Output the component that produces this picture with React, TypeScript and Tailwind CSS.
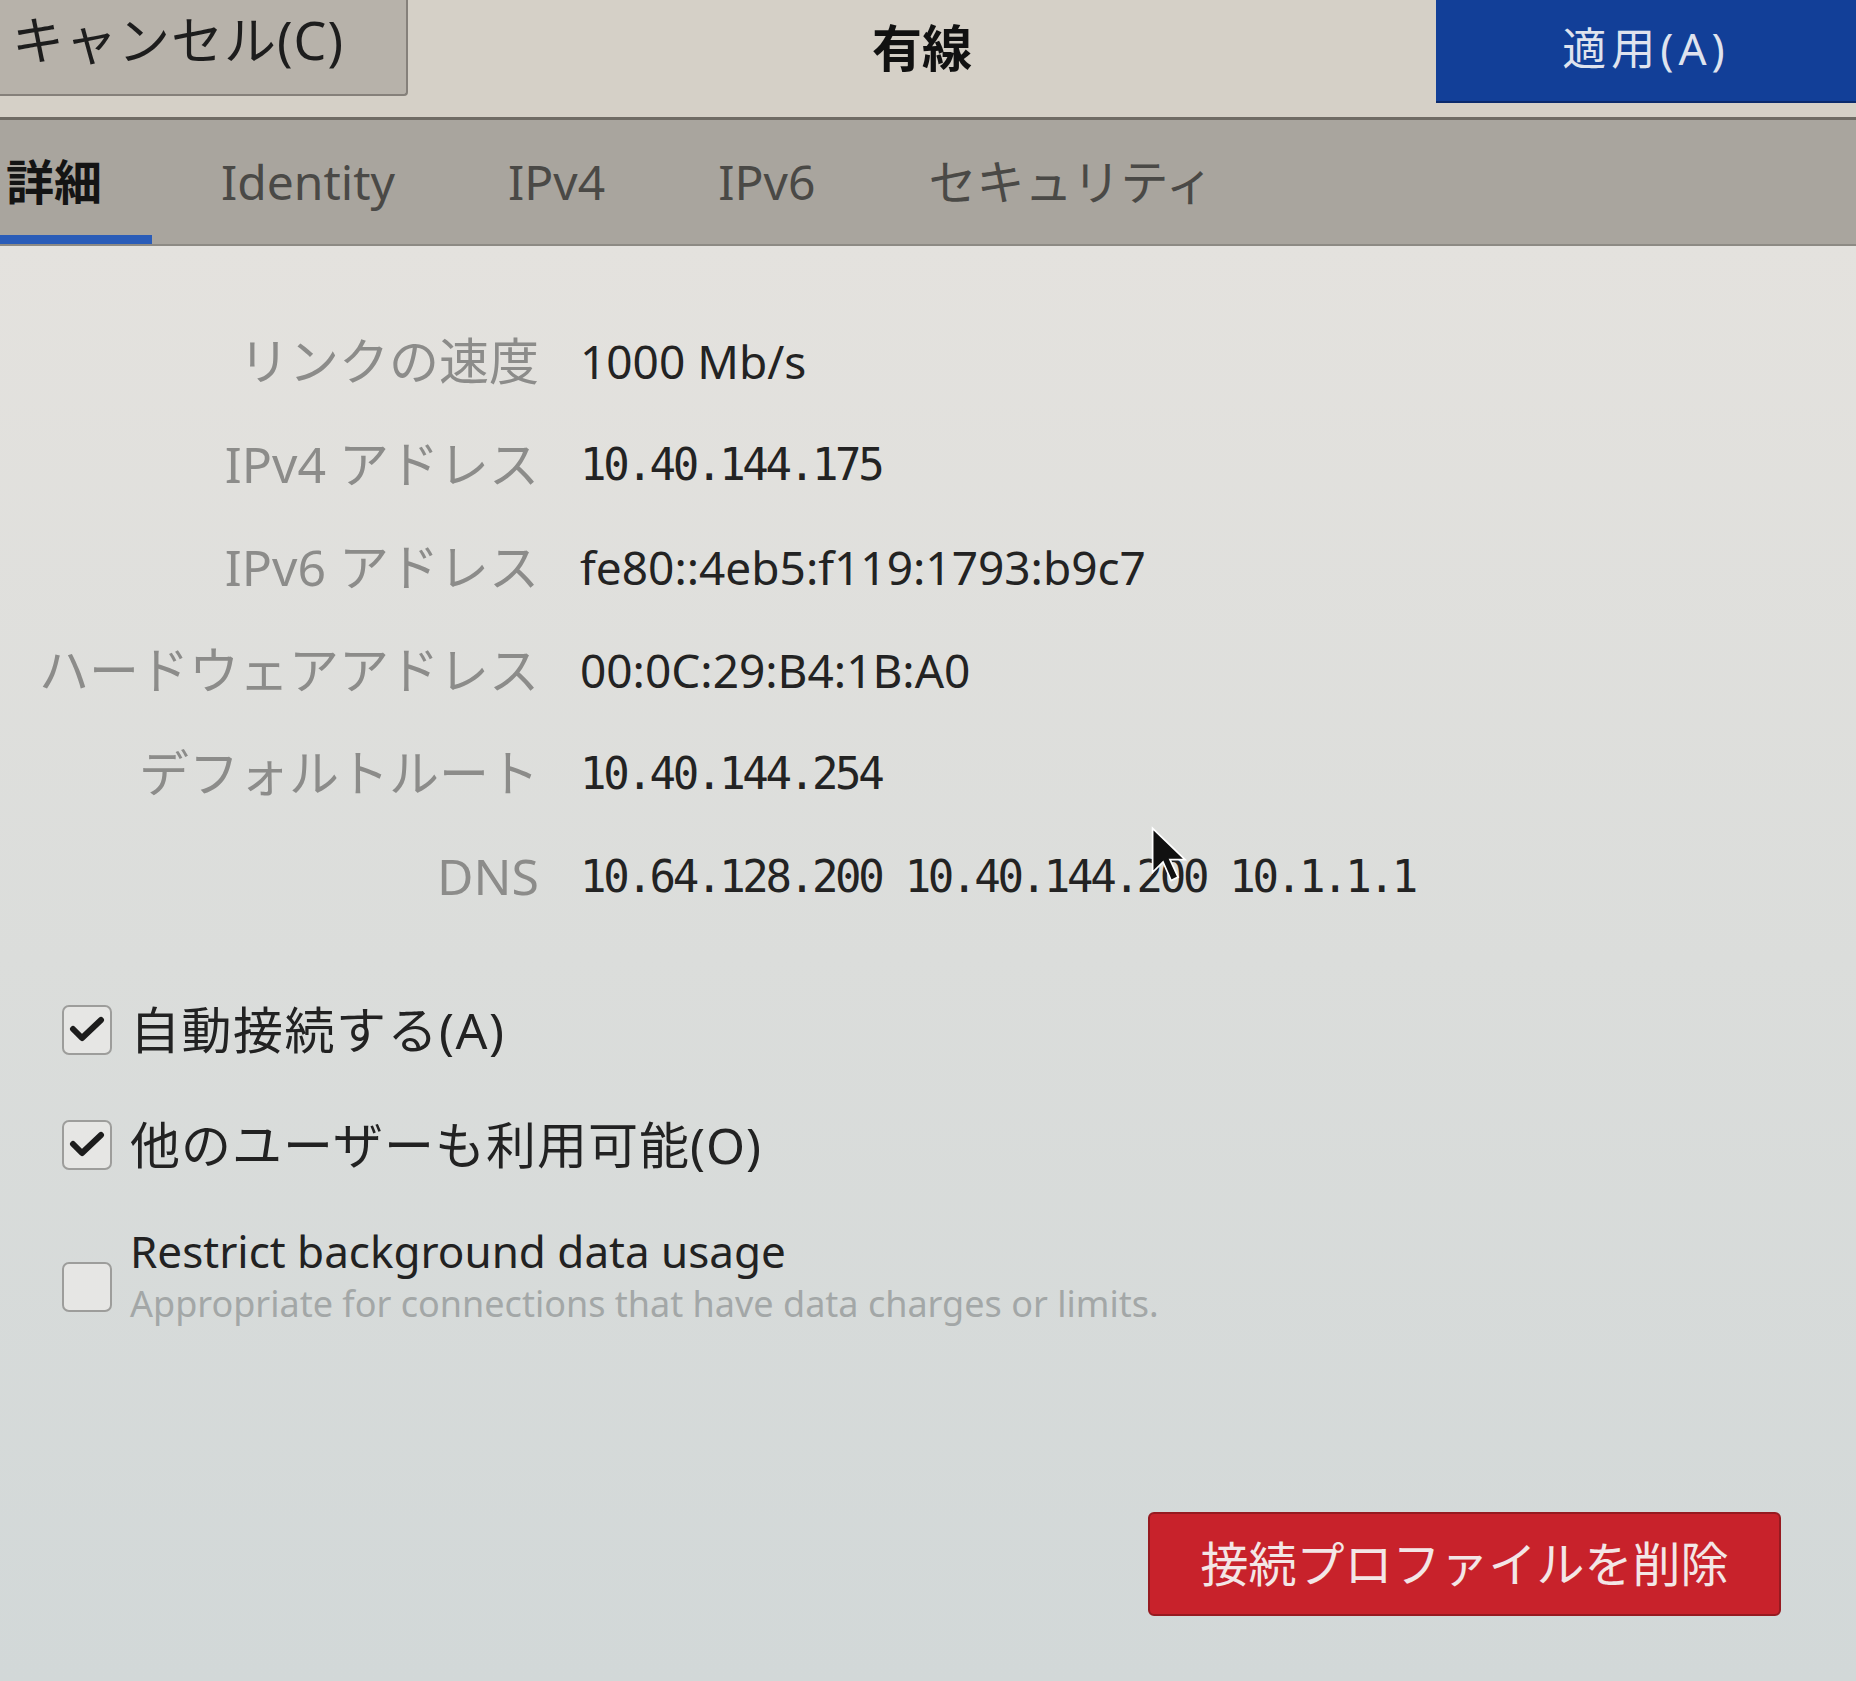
const sans = "font-['Noto_Sans','Noto_Sans_CJK_JP',sans-serif]";
const mono = "font-['DejaVu_Sans_Mono','Noto_Sans_CJK_JP',monospace] text-[44px] tracking-[-3.3px] text-[#232323]";

const rows: { label: string; value: string; mono?: boolean }[] = [
  { label: "リンクの速度", value: "1000 Mb/s" },
  { label: "IPv4 アドレス", value: "10.40.144.175", mono: true },
  { label: "IPv6 アドレス", value: "fe80::4eb5:f119:1793:b9c7" },
  { label: "ハードウェアアドレス", value: "00:0C:29:B4:1B:A0" },
  { label: "デフォルトルート", value: "10.40.144.254", mono: true },
  { label: "DNS", value: "10.64.128.200 10.40.144.200 10.1.1.1", mono: true },
];

const CheckBox = ({ checked }: { checked: boolean }) => (
  <div className="w-[50px] h-[50px] shrink-0 rounded-[7px] border-2 border-[#9d9d9b] bg-[#e6e6e4] flex items-center justify-center">
    {checked && (
      <svg width="36" height="30" viewBox="0 0 36 30">
        <path d="M4 14 L13 23 L32 5" fill="none" stroke="#1c1c1c" strokeWidth="6" strokeLinecap="round" strokeLinejoin="round" />
      </svg>
    )}
  </div>
);

export default function App() {
  return (
    <div className={`w-[1856px] h-[1681px] flex flex-col overflow-hidden ${sans}`}>
      {/* header bar */}
      <div className="h-[120px] shrink-0 grid grid-cols-[408px_1fr_420px] items-start bg-[#d5d0c7] border-b-[3px] border-[#6f6b64]">
        <button className="h-[96px] bg-[#b7b2aa] border-r-2 border-b-2 border-[#85807a] rounded-br-[4px] text-left pl-[12px] text-[52px] tracking-[1px] text-[#1d1d1d] leading-none pb-[14px]">
          キャンセル(C)
        </button>
        <div className="h-[96px] flex items-center justify-center text-[50px] font-bold text-[#111]">有線</div>
        <button className="h-[103px] bg-[#123f98] border-b-2 border-[#0b2a6c] text-[44px] tracking-[5px] text-[#dfe3ee] leading-none pb-[6px]">
          適用(A)
        </button>
      </div>

      {/* tabs */}
      <div className="h-[126px] shrink-0 flex items-stretch bg-[#a9a59e] border-b-2 border-[#8d8a84] text-[48px] leading-none">
        <div className="w-[152px] flex items-center pl-[6px] font-bold text-[#141414] border-b-[9px] border-[#2a5cb8] pt-[9px]">詳細</div>
        <div className="flex items-center gap-[113px] ml-[69px] text-[#4a4946]">
          <span>Identity</span>
          <span>IPv4</span>
          <span>IPv6</span>
          <span>セキュリティ</span>
        </div>
      </div>

      {/* body */}
      <div className="relative flex-1 flex flex-col bg-linear-to-b from-[#e4e2de] to-[#d2d8d8]">
        <div className="grid grid-cols-[539px_1fr] gap-x-[41px] mt-[64px]">
          {rows.map((r) => (
            <div key={r.label} className="contents">
              <div className="h-[103px] flex items-center justify-end text-[50px] text-[#8c8c8a] whitespace-nowrap">{r.label}</div>
              <div className={`h-[103px] flex items-center whitespace-nowrap ${r.mono ? mono : "text-[46px] text-[#232323]"}`}>{r.value}</div>
            </div>
          ))}
        </div>

        <div className="flex flex-col pl-[62px] mt-[72px]">
          <div className="flex items-center gap-[18px] h-[60px]">
            <CheckBox checked />
            <span className="text-[50px] tracking-[1.5px] text-[#222]">自動接続する(A)</span>
          </div>
          <div className="flex items-center gap-[18px] h-[60px] mt-[55px]">
            <CheckBox checked />
            <span className="text-[50px] tracking-[1px] text-[#222]">他のユーザーも利用可能(O)</span>
          </div>
          <div className="flex items-center gap-[18px] mt-[48px]">
            <CheckBox checked={false} />
            <div className="flex flex-col mb-[22px]">
              <span className="text-[44px] leading-[56px] text-[#222]">Restrict background data usage</span>
              <span className="text-[36px] leading-[50px] text-[#a3a7a7]">Appropriate for connections that have data charges or limits.</span>
            </div>
          </div>
        </div>

        <div className="flex-1" />
        <div className="flex justify-end pr-[75px] mb-[65px]">
          <button className="w-[633px] h-[104px] bg-[#c8222b] border-2 border-[#961a20] rounded-[6px] text-[48px] text-[#f3e6e6] leading-none">
            接続プロファイルを削除
          </button>
        </div>

        {/* mouse pointer */}
        <svg className="absolute left-[1150px] top-[580px]" width="40" height="58" viewBox="0 0 34 50">
          <path d="M2 2 L2 40 L11 31 L18 47 L24 44 L17 29 L30 29 Z" fill="#111" stroke="#fff" strokeWidth="1.5" />
        </svg>
      </div>
    </div>
  );
}
